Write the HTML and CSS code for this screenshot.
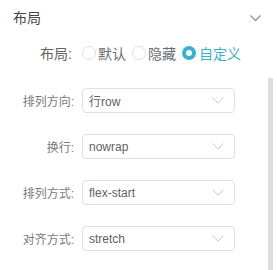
FILE: index.html
```html
<!DOCTYPE html>
<html lang="zh-CN">

<head>
    <meta charset="UTF-8">
    <meta name="viewport" content="width=device-width, initial-scale=1.0">
    <title>布局</title>
    <link rel="stylesheet" href="styles.css">
</head>

<body>
    <div class="header">
        <span class="title">布局</span>
        <svg class="arrow" width="11" height="6" viewBox="0 0 11 6">
            <path d="M0.5 0.5 L5.5 5.5 L10.5 0.5" fill="none" stroke="#888" stroke-width="1.1" />
        </svg>
    </div>
    <div class="radio-row">
        <label class="label big">布局:</label>
        <div class="radios">
            <span class="radio"><i class="dot"></i>默认</span>
            <span class="radio"><i class="dot"></i>隐藏</span>
            <span class="radio on"><i class="dot"></i>自定义</span>
        </div>
    </div>
    <div class="panel">
        <div class="form">
            <div class="row">
                <label class="label">排列方向:</label>
                <div class="select"><span>行row</span><svg class="caret" width="12" height="7" viewBox="0 0 12 7"><path d="M0.5 0.5 L6 6 L11.5 0.5" fill="none" stroke="#c8cad0" stroke-width="1" /></svg></div>
            </div>
            <div class="row">
                <label class="label">换行:</label>
                <div class="select"><span>nowrap</span><svg class="caret" width="12" height="7" viewBox="0 0 12 7"><path d="M0.5 0.5 L6 6 L11.5 0.5" fill="none" stroke="#c8cad0" stroke-width="1" /></svg></div>
            </div>
            <div class="row">
                <label class="label">排列方式:</label>
                <div class="select"><span>flex-start</span><svg class="caret" width="12" height="7" viewBox="0 0 12 7"><path d="M0.5 0.5 L6 6 L11.5 0.5" fill="none" stroke="#c8cad0" stroke-width="1" /></svg></div>
            </div>
            <div class="row">
                <label class="label">对齐方式:</label>
                <div class="select"><span>stretch</span><svg class="caret" width="12" height="7" viewBox="0 0 12 7"><path d="M0.5 0.5 L6 6 L11.5 0.5" fill="none" stroke="#c8cad0" stroke-width="1" /></svg></div>
            </div>
        </div>
        <div class="scrollbar"></div>
    </div>
</body>

</html>
```

FILE: styles.css
```css
* {
    box-sizing: border-box;
    font-family: 'Liberation Sans', Arial, 'Noto Sans CJK SC', sans-serif;
}

body {
    margin: 0;
    background: #fff;
    color: #606266;
}

.header {
    height: 34px;
    padding: 0 16px 0 13px;
    display: flex;
    justify-content: space-between;
    align-items: center;
}

.title {
    font-size: 14px;
    color: #444;
}

.arrow {
    margin-top: 1px;
}

.radio-row {
    margin-top: 7px;
    height: 24px;
    display: flex;
    align-items: center;
}

.label {
    width: 82px;
    padding-right: 8px;
    text-align: right;
    font-size: 12px;
    color: #7a7a7a;
    flex-shrink: 0;
}

.label.big {
    font-size: 14px;
    padding-right: 10px;
    color: #606266;
}

.radios {
    display: flex;
    gap: 6px;
}

.radio {
    display: flex;
    align-items: center;
    gap: 2px;
    font-size: 14px;
    color: #6b6d72;
}

.dot {
    width: 14px;
    height: 14px;
    border: 1px solid #dcdfe6;
    border-radius: 50%;
    background: #fff;
}

.radio.on {
    color: #3ab3c8;
    gap: 3px;
}

.radio.on .dot {
    border: 4px solid #3ab3c8;
}

.panel {
    margin-top: 13px;
    height: 192px;
    display: flex;
    overflow: hidden;
}

.form {
    flex: 1;
    padding-top: 10px;
    display: flex;
    flex-direction: column;
    gap: 21px;
}

.row {
    display: flex;
    align-items: center;
}

.select {
    width: 153px;
    height: 25px;
    border: 1px solid #dcdfe6;
    border-radius: 4px;
    padding: 0 10px 0 6px;
    display: flex;
    justify-content: space-between;
    align-items: center;
    font-size: 12px;
    color: #606266;
}

.scrollbar {
    width: 5px;
    margin-right: 4px;
    background: #ddd;
}
```
